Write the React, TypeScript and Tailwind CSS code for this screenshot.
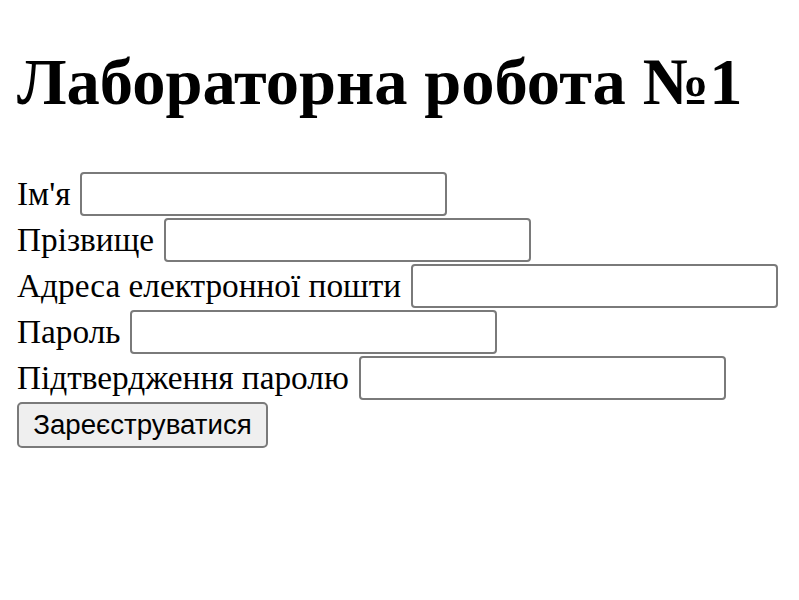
export default function App() {
  const rows: string[] = [
    "Ім'я",
    "Прізвище",
    "Адреса електронної пошти",
    "Пароль",
    "Підтвердження паролю",
  ];
  return (
    <div className="min-h-[600px] w-[799px] bg-white px-[17px] pt-[44px] text-black" style={{ fontFamily: '"Liberation Serif", "Times New Roman", serif' }}>
      <h1 className="m-0 text-[66.5px] font-bold leading-[76px]">Лабораторна робота №1</h1>
      <form className="mt-[51px] flex flex-col text-[33.3px] leading-[40px]" onSubmit={(e) => e.preventDefault()}>
        {rows.map((r) => (
          <div key={r} className="flex h-[46px] items-center">
            <span className="whitespace-nowrap">{r}</span>
            <input
              type="text"
              className="ml-[10px] h-[44px] w-[367px] rounded-[4px] border-2 border-[#7a7a7a] bg-white outline-none"
            />
          </div>
        ))}
        <div className="pt-[1px]">
          <button
            type="submit"
            className="h-[46px] w-[251px] rounded-[5px] border-2 border-[#7a7a7a] bg-[#efefef] text-[27.7px] leading-none text-black"
            style={{ fontFamily: '"Liberation Sans", Arial, sans-serif' }}
          >
            Зареєструватися
          </button>
        </div>
      </form>
    </div>
  );
}
